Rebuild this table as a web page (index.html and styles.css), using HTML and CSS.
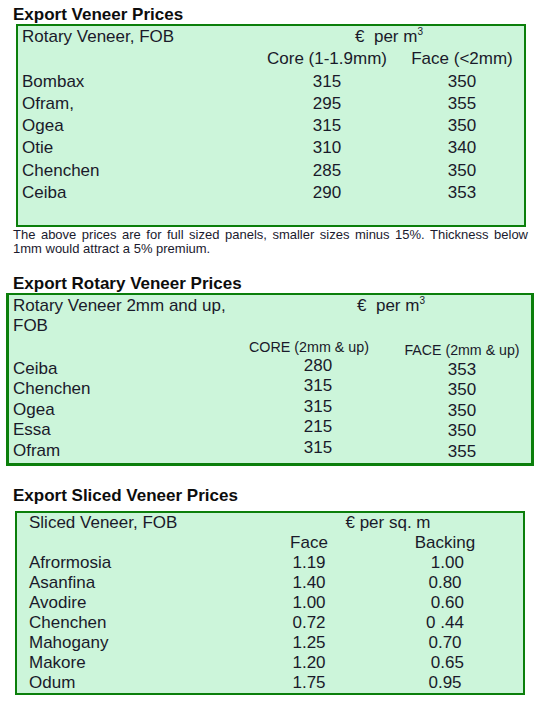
FILE: index.html
```html
<!DOCTYPE html>
<html>
<head>
<meta charset="utf-8">
<title>Export Veneer Prices</title>
<link rel="stylesheet" href="styles.css">
</head>
<body>
<div class="title t1">Export Veneer Prices</div>
<div class="box box1">
  <div class="name">Rotary Veneer, FOB</div>
  <div class="unit">€&nbsp; per m<sup>3</sup></div>
  <div class="name"></div>
  <div class="num">Core (1-1.9mm)</div>
  <div class="num">Face (&lt;2mm)</div>
  <div class="name">Bombax</div><div class="num">315</div><div class="num">350</div>
  <div class="name">Ofram,</div><div class="num">295</div><div class="num">355</div>
  <div class="name">Ogea</div><div class="num">315</div><div class="num">350</div>
  <div class="name">Otie</div><div class="num">310</div><div class="num">340</div>
  <div class="name">Chenchen</div><div class="num">285</div><div class="num">350</div>
  <div class="name">Ceiba</div><div class="num">290</div><div class="num">353</div>
</div>
<p class="note">The above prices are for full sized panels, smaller sizes minus 15%. Thickness below 1mm would attract a 5% premium.</p>

<div class="title t2">Export Rotary Veneer Prices</div>
<div class="box box2">
  <div class="name head-name">Rotary Veneer 2mm and up,<br>FOB</div>
  <div class="unit">€&nbsp; per m<sup>3</sup></div>
  <div class="core-head">CORE (2mm &amp; up)</div>
  <div class="face-head">FACE (2mm &amp; up)</div>
  <div class="name">Ceiba</div><div class="c2">280</div><div class="c3">353</div>
  <div class="name">Chenchen</div><div class="c2">315</div><div class="c3">350</div>
  <div class="name">Ogea</div><div class="c2">315</div><div class="c3">350</div>
  <div class="name">Essa</div><div class="c2">215</div><div class="c3">350</div>
  <div class="name">Ofram</div><div class="c2">315</div><div class="c3">355</div>
</div>

<div class="title t3">Export Sliced Veneer Prices</div>
<div class="box box3">
  <div class="name">Sliced Veneer, FOB</div>
  <div class="unit">€ per sq. m</div>
  <div class="name"></div><div class="f">Face</div><div class="b">Backing</div>
  <div class="name">Afrormosia</div><div class="f">1.19</div><div class="b">&nbsp;1.00</div>
  <div class="name">Asanfina</div><div class="f">1.40</div><div class="b">0.80</div>
  <div class="name">Avodire</div><div class="f">1.00</div><div class="b">&nbsp;0.60</div>
  <div class="name">Chenchen</div><div class="f">0.72</div><div class="b">0 .44</div>
  <div class="name">Mahogany</div><div class="f">1.25</div><div class="b">0.70</div>
  <div class="name">Makore</div><div class="f">1.20</div><div class="b">&nbsp;0.65</div>
  <div class="name">Odum</div><div class="f">1.75</div><div class="b">0.95</div>
</div>
</body>
</html>
```
FILE: styles.css
```css
html, body {
  margin: 0;
  padding: 0;
  background: #ffffff;
}
body {
  font-family: "Liberation Sans", Arial, sans-serif;
  color: #1a1a2a;
  width: 544px;
}
.title {
  font-weight: 700;
  font-size: 17px;
  line-height: 19px;
  color: #0d0d0d;
  margin-left: 13px;
}
.t1 { margin-top: 5px; }
.t2 { margin-top: 18.6px; line-height: 18px; }
.t3 { margin-top: 20px; margin-bottom: 6.4px; }

.box {
  box-sizing: border-box;
  background: #ccf5da;
  border: 2px solid #0b7f0b;
  display: grid;
  font-size: 17px;
}
.name { padding-left: 4px; white-space: nowrap; }
.unit { grid-column: 2 / 4; text-align: center; white-space: nowrap; }
sup {
  font-size: 10px;
  line-height: 0;
  vertical-align: 7px;
}

/* box 1 */
.box1 {
  margin-left: 16px;
  width: 510px;
  padding-bottom: 21px;
  grid-template-columns: 236px 146px 124px;
  grid-auto-rows: 22.3px;
  line-height: 22.3px;
}
.box1 .num { text-align: center; white-space: nowrap; }

.note {
  margin: 1px 0 0 13px;
  width: 515px;
  font-size: 13px;
  line-height: 14px;
  text-align: justify;
  color: #1a1a2e;
}

/* box 2 */
.box2 {
  margin-left: 6px;
  width: 528px;
  border-width: 2px 3px 3px 3px;
  padding: 1px 0 2px 0;
  grid-template-columns: 227px 120px 124px;
  column-gap: 22px;
  grid-template-rows: 40px 23.1px repeat(5, 20.4px);
  line-height: 20.4px;
}
.box2 .head-name { line-height: 20px; }
.box2 .unit { line-height: 20px; }
.core-head {
  grid-column: 1 / 3;
  text-align: right;
  padding-right: 9px;
  font-size: 14.3px;
  line-height: 23.1px;
  white-space: nowrap;
}
.face-head {
  grid-column: 3;
  align-self: end;
  text-align: center;
  font-size: 14.2px;
  line-height: 18px;
  white-space: nowrap;
}
.c2 { text-align: center; line-height: 14.3px; align-self: start; }
.c3 { text-align: center; line-height: 22.4px; align-self: start; }

/* box 3 */
.box3 {
  margin-left: 15px;
  width: 510px;
  grid-template-columns: 242px 100px 36px 100px;
  grid-auto-rows: 20px;
  line-height: 20px;
}
.box3 .name { padding-left: 12px; }
.box3 .unit { grid-column: 2 / 5; padding-left: 22px; }
.box3 .f { grid-column: 2; text-align: center; }
.box3 .b { grid-column: 4; text-align: center; white-space: pre; }
```
